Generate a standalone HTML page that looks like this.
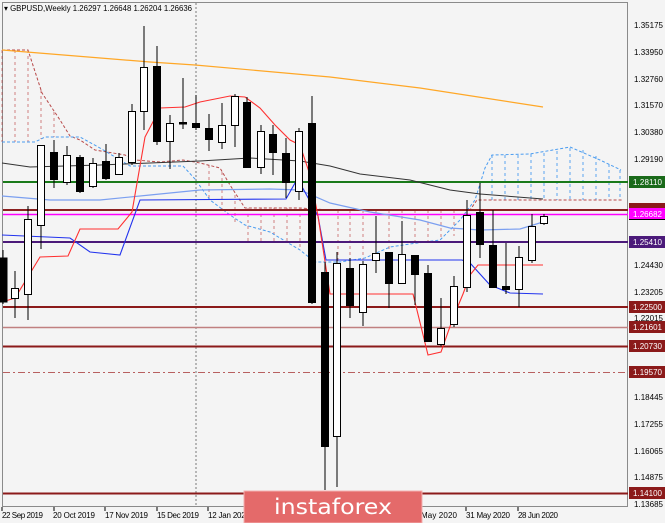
<!DOCTYPE html>
<html><head><meta charset="utf-8"><style>
html,body{margin:0;padding:0;background:#f4f4f4;}
svg{display:block;font-family:"Liberation Sans",sans-serif;}
</style></head><body>
<svg width="665" height="523" viewBox="0 0 665 523" xmlns="http://www.w3.org/2000/svg">
<rect width="665" height="523" fill="#f4f4f4"/>
<rect x="2.5" y="2.5" width="625" height="504" fill="none" stroke="#8a8a8a" stroke-width="1"/>
<line x1="196" y1="3" x2="196" y2="506" stroke="#777" stroke-dasharray="2,2"/>

<g stroke="#b33" stroke-width="0.8" stroke-dasharray="3,3" opacity="0.75">
<line x1="2" y1="50" x2="2" y2="142"/><line x1="15" y1="50" x2="15" y2="142"/><line x1="28" y1="50" x2="28" y2="142"/>
<line x1="41" y1="90" x2="41" y2="139"/><line x1="54" y1="112" x2="54" y2="137"/>
<line x1="209" y1="165" x2="209" y2="198"/><line x1="222" y1="172" x2="222" y2="212"/>
<line x1="235" y1="195" x2="235" y2="222"/><line x1="248" y1="208" x2="248" y2="242"/>
<line x1="261" y1="208" x2="261" y2="242"/><line x1="274" y1="208" x2="274" y2="242"/>
<line x1="287" y1="208" x2="287" y2="244"/><line x1="300" y1="208" x2="300" y2="250"/>
<line x1="338" y1="210" x2="338" y2="262"/><line x1="350" y1="210" x2="350" y2="262"/>
<line x1="363" y1="210" x2="363" y2="260"/><line x1="376" y1="210" x2="376" y2="255"/>
<line x1="389" y1="210" x2="389" y2="250"/><line x1="402" y1="210" x2="402" y2="245"/>
<line x1="415" y1="210" x2="415" y2="243"/><line x1="428" y1="210" x2="428" y2="242"/>
<line x1="441" y1="210" x2="441" y2="240"/><line x1="454" y1="210" x2="454" y2="236"/>
</g>
<g stroke="#4a9cf0" stroke-width="0.9" stroke-dasharray="3,3">
<line x1="492" y1="155" x2="492" y2="200"/><line x1="505" y1="155" x2="505" y2="200"/>
<line x1="518" y1="155" x2="518" y2="200"/><line x1="531" y1="154" x2="531" y2="200"/>
<line x1="544" y1="153" x2="544" y2="200"/><line x1="557" y1="151" x2="557" y2="200"/>
<line x1="570" y1="148" x2="570" y2="200"/><line x1="583" y1="150" x2="583" y2="200"/>
<line x1="596" y1="156" x2="596" y2="200"/><line x1="609" y1="164" x2="609" y2="200"/>
<line x1="620" y1="170" x2="620" y2="200"/>
</g>
<polyline fill="none" stroke="#b84a4a" stroke-width="1" stroke-dasharray="3,2" points="2,50 28,50 42,93 60,120 70,136 80,140 95,150 125,155 135,160 160,162 183,160 200,163 220,168 230,185 245,208 300,208 330,210 470,210 477,200 622,200"/>
<polyline fill="none" stroke="#4a9cf0" stroke-width="1" stroke-dasharray="3,2" points="2,142 35,142 45,137 80,137 100,148 130,166 183,166 195,179 210,200 230,215 245,225 270,232 300,250 315,262 340,262 365,258 390,247 410,244 440,240 460,220 475,200 485,168 492,155 530,154 570,147 600,160 621,170"/>

<line x1="3" y1="182" x2="628" y2="182" stroke="#1a7a1a" stroke-width="2"/>
<line x1="3" y1="210" x2="628" y2="210" stroke="#8b2020" stroke-width="2"/>
<line x1="3" y1="214.5" x2="628" y2="214.5" stroke="#ff00ff" stroke-width="1.5"/>
<line x1="3" y1="242" x2="628" y2="242" stroke="#4b1a7a" stroke-width="2"/>
<line x1="3" y1="307" x2="628" y2="307" stroke="#8b1a1a" stroke-width="2"/>
<line x1="3" y1="327.5" x2="628" y2="327.5" stroke="#c08080" stroke-width="1.5"/>
<line x1="3" y1="346.5" x2="628" y2="346.5" stroke="#8b1a1a" stroke-width="2"/>
<line x1="3" y1="372.5" x2="628" y2="372.5" stroke="#b86060" stroke-width="1" stroke-dasharray="7,3,2,3"/>
<line x1="3" y1="493.5" x2="628" y2="493.5" stroke="#8b1a1a" stroke-width="2"/>

<polyline fill="none" stroke="#ffa726" stroke-width="1.2" points="2,50 150,62 195,65 330,77 420,88 543,107"/>
<polyline fill="none" stroke="#333" stroke-width="1" points="2,163 30,167 100,165 150,163 200,161 250,158 300,161 330,166 360,174 410,180 450,190 480,194 543,199"/>
<polyline fill="none" stroke="#7b9ff0" stroke-width="1.2" points="2,196 50,200 100,200 150,195 200,190 270,189 300,190 330,203 370,212 420,220 450,228 480,230 520,229 543,222"/>
<polyline fill="none" stroke="#2233ee" stroke-width="1.1" points="2,235 70,238 90,252 120,255 140,200 286,199 295,183 300,183 318,216 326,260 462,260 470,263 490,285 510,293 543,294"/>
<polyline fill="none" stroke="#ff3030" stroke-width="1.1" points="2,302 15,298 40,257 68,256 80,229 118,229 132,212 145,137 155,118 160,108 185,107 200,102 230,96 245,97 260,108 275,125 290,140 300,145 310,175 318,216 330,294 413,294 428,355 441,352 453,318 463,294 470,275 478,265 543,265"/>

<g stroke="#000" stroke-width="1">
<line x1="3" y1="250" x2="3" y2="304"/><rect x="-1" y="258" width="8" height="44" fill="#000"/>
<line x1="15" y1="271" x2="15" y2="318"/><rect x="11.5" y="288.5" width="7" height="10" fill="#fff"/>
<line x1="28" y1="206" x2="28" y2="320"/><rect x="24.5" y="219.5" width="7" height="75" fill="#fff"/>
<line x1="41" y1="145" x2="41" y2="249"/><rect x="37.5" y="145.5" width="7" height="80" fill="#fff"/>
<line x1="54" y1="140" x2="54" y2="188"/><rect x="50.5" y="152.5" width="7" height="27" fill="#000"/>
<line x1="67" y1="146" x2="67" y2="185"/><rect x="63.5" y="155.5" width="7" height="27" fill="#fff"/>
<line x1="80" y1="155" x2="80" y2="193"/><rect x="76.5" y="157.5" width="7" height="34" fill="#000"/>
<line x1="93" y1="158" x2="93" y2="188"/><rect x="89.5" y="163.5" width="7" height="23" fill="#fff"/>
<line x1="106" y1="144" x2="106" y2="180"/><rect x="102.5" y="161.5" width="7" height="17" fill="#000"/>
<line x1="119" y1="153" x2="119" y2="175"/><rect x="115.5" y="157.5" width="7" height="17" fill="#fff"/>
<line x1="132" y1="104" x2="132" y2="165"/><rect x="128.5" y="111.5" width="7" height="51" fill="#fff"/>
<line x1="144" y1="26" x2="144" y2="130"/><rect x="140.5" y="67.5" width="7" height="44" fill="#fff"/>
<line x1="157" y1="46" x2="157" y2="145"/><rect x="153.5" y="66.5" width="7" height="75" fill="#000"/>
<line x1="170" y1="115" x2="170" y2="169"/><rect x="166.5" y="123.5" width="7" height="18" fill="#fff"/>
<line x1="183" y1="78" x2="183" y2="129"/><rect x="179.5" y="122.5" width="7" height="1.5" fill="#000"/>
<line x1="196" y1="95" x2="196" y2="130"/><rect x="192.5" y="123.5" width="7" height="4" fill="#000"/>
<line x1="209" y1="114" x2="209" y2="151"/><rect x="205.5" y="128.5" width="7" height="11" fill="#000"/>
<line x1="222" y1="103" x2="222" y2="149"/><rect x="218.5" y="125.5" width="7" height="17" fill="#fff"/>
<line x1="235" y1="94" x2="235" y2="147"/><rect x="231.5" y="96.5" width="7" height="29" fill="#fff"/>
<line x1="247" y1="97" x2="247" y2="168"/><rect x="243.5" y="102.5" width="7" height="65" fill="#000"/>
<line x1="261" y1="125" x2="261" y2="174"/><rect x="257.5" y="131.5" width="7" height="36" fill="#fff"/>
<line x1="273" y1="125" x2="273" y2="175"/><rect x="269.5" y="134.5" width="7" height="18" fill="#000"/>
<line x1="286" y1="138" x2="286" y2="198"/><rect x="282.5" y="153.5" width="7" height="29" fill="#000"/>
<line x1="299" y1="128" x2="299" y2="200"/><rect x="295.5" y="131.5" width="7" height="60" fill="#fff"/>
<line x1="312" y1="96" x2="312" y2="304"/><rect x="308.5" y="123.5" width="7" height="179" fill="#000"/>
<line x1="325" y1="262" x2="325" y2="490"/><rect x="321.5" y="272.5" width="7" height="174" fill="#000"/>
<line x1="337" y1="252" x2="337" y2="487"/><rect x="333.5" y="263.5" width="7" height="173" fill="#fff"/>
<line x1="350" y1="258" x2="350" y2="318"/><rect x="346.5" y="268.5" width="7" height="37" fill="#000"/>
<line x1="363" y1="261" x2="363" y2="326"/><rect x="359.5" y="264.5" width="7" height="48" fill="#fff"/>
<line x1="376" y1="216" x2="376" y2="273"/><rect x="372.5" y="253.5" width="7" height="7" fill="#fff"/>
<line x1="389" y1="252" x2="389" y2="308"/><rect x="385.5" y="252.5" width="7" height="31" fill="#000"/>
<line x1="402" y1="221" x2="402" y2="284"/><rect x="398.5" y="254.5" width="7" height="29" fill="#fff"/>
<line x1="415" y1="255" x2="415" y2="305"/><rect x="411.5" y="255.5" width="7" height="19" fill="#000"/>
<line x1="428" y1="265" x2="428" y2="342"/><rect x="424.5" y="273.5" width="7" height="68" fill="#000"/>
<line x1="441" y1="298" x2="441" y2="346"/><rect x="437.5" y="328.5" width="7" height="16" fill="#fff"/>
<line x1="454" y1="276" x2="454" y2="327"/><rect x="450.5" y="286.5" width="7" height="38" fill="#fff"/>
<line x1="467" y1="200" x2="467" y2="292"/><rect x="463.5" y="215.5" width="7" height="72" fill="#fff"/>
<line x1="480" y1="183" x2="480" y2="258"/><rect x="476.5" y="212.5" width="7" height="32" fill="#000"/>
<line x1="493" y1="210" x2="493" y2="287"/><rect x="489.5" y="245.5" width="7" height="42" fill="#000"/>
<line x1="506" y1="243" x2="506" y2="294"/><rect x="502.5" y="286.5" width="7" height="3" fill="#000"/>
<line x1="519" y1="246" x2="519" y2="307"/><rect x="515.5" y="257.5" width="7" height="32" fill="#fff"/>
<line x1="532" y1="214" x2="532" y2="263"/><rect x="528.5" y="226.5" width="7" height="34" fill="#fff"/>
<line x1="544" y1="214" x2="544" y2="225"/><rect x="540.5" y="216.5" width="7" height="7" fill="#fff"/>
</g>

<text x="4" y="11" font-size="8" fill="#000" textLength="188" lengthAdjust="spacingAndGlyphs">▾ GBPUSD,Weekly  1.26297 1.26648 1.26204 1.26636</text>

<g font-size="8" fill="#000" lengthAdjust="spacingAndGlyphs">
<text x="634" y="28" textLength="29">1.35175</text>
<text x="634" y="55" textLength="29">1.33950</text>
<text x="634" y="82" textLength="29">1.32760</text>
<text x="634" y="108" textLength="29">1.31570</text>
<text x="634" y="135" textLength="29">1.30380</text>
<text x="634" y="162" textLength="29">1.29190</text>
<text x="634" y="268" textLength="29">1.24430</text>
<text x="634" y="295" textLength="29">1.23205</text>
<text x="634" y="321" textLength="29">1.22015</text>
<text x="634" y="400" textLength="29">1.18445</text>
<text x="634" y="427" textLength="29">1.17255</text>
<text x="634" y="454" textLength="29">1.16065</text>
<text x="634" y="480" textLength="29">1.14875</text>
<text x="634" y="507" textLength="29">1.13685</text>
</g>
<g font-size="8" fill="#fff" lengthAdjust="spacingAndGlyphs">
<rect x="629" y="176" width="36" height="12" fill="#1a6a1a"/><text x="633" y="185" textLength="29">1.28110</text>
<rect x="629" y="203" width="36" height="12" fill="#8b1a1a"/>
<rect x="629" y="213" width="36" height="7" fill="#000"/>
<rect x="629" y="208" width="36" height="11" fill="#ff00ff"/><text x="633" y="217" textLength="29">1.26682</text>
<rect x="629" y="236" width="36" height="12" fill="#4b1a7a"/><text x="633" y="245" textLength="29">1.25410</text>
<rect x="629" y="301" width="36" height="12" fill="#8b1a1a"/><text x="633" y="310" textLength="29">1.22500</text>
<rect x="629" y="321" width="36" height="12" fill="#8b1a1a"/><text x="633" y="330" textLength="29">1.21601</text>
<rect x="629" y="340" width="36" height="12" fill="#8b1a1a"/><text x="633" y="349" textLength="29">1.20730</text>
<rect x="629" y="366" width="36" height="12" fill="#8b1a1a"/><text x="633" y="375" textLength="29">1.19570</text>
<rect x="629" y="487" width="36" height="12" fill="#8b1a1a"/><text x="633" y="496" textLength="29">1.14100</text>
</g>

<g stroke="#000"><line x1="2" y1="507" x2="2" y2="511"/><line x1="54" y1="507" x2="54" y2="511"/><line x1="105" y1="507" x2="105" y2="511"/><line x1="157" y1="507" x2="157" y2="511"/><line x1="208" y1="507" x2="208" y2="511"/><line x1="466" y1="507" x2="466" y2="511"/><line x1="518" y1="507" x2="518" y2="511"/></g>
<g font-size="8" fill="#000" lengthAdjust="spacingAndGlyphs">
<text x="2" y="518" textLength="41">22 Sep 2019</text>
<text x="53" y="518" textLength="42">20 Oct 2019</text>
<text x="105" y="518" textLength="43">17 Nov 2019</text>
<text x="157" y="518" textLength="42">15 Dec 2019</text>
<text x="208" y="518" textLength="42">12 Jan 2020</text>
<text x="414" y="518" textLength="43">3 May 2020</text>
<text x="466" y="518" textLength="44">31 May 2020</text>
<text x="518" y="518" textLength="40">28 Jun 2020</text>
</g>

<rect x="244" y="491" width="178" height="32" fill="#e46a6a" stroke="#f4b0b0" stroke-width="1"/>
<text x="333" y="514" font-size="21" fill="#fff" text-anchor="middle" font-family="'DejaVu Sans','Liberation Sans',sans-serif" textLength="118" lengthAdjust="spacingAndGlyphs">instaforex</text>
</svg>
</body></html>
